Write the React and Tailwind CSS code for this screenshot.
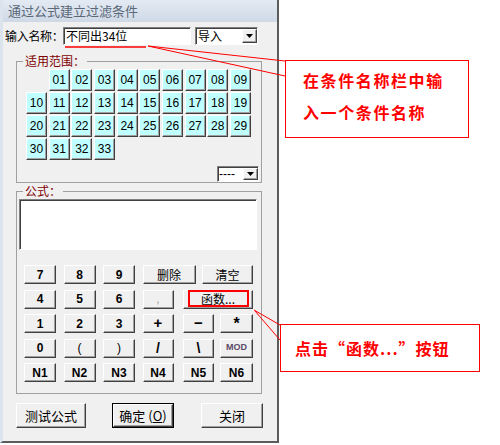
import React from 'react';

const CJK = "font-['SimSun','Noto_Sans_CJK_SC',sans-serif]";
const SANS = "font-['Liberation_Sans','Noto_Sans_CJK_SC',sans-serif]";
const raised =
  'border border-t-white border-l-white border-r-[#404040] border-b-[#404040] shadow-[inset_-1px_-1px_0_#a0a0a0]';
const sunken =
  'border border-t-[#808080] border-l-[#808080] border-r-white border-b-white shadow-[inset_1px_1px_0_#404040]';

function Arrow() {
  return (
    <svg width="7" height="4" viewBox="0 0 7 4">
      <polygon points="0,0 7,0 3.5,4" fill="#000" />
    </svg>
  );
}

function Key({ className = '', children }) {
  return (
    <div className={`h-[19px] flex items-center justify-center bg-[#f0f0f0] text-[12px] font-bold text-black ${SANS} ${raised} ${className}`}>
      {children}
    </div>
  );
}

function Cell({ label }) {
  if (!label) return <div className="w-[21px] h-[22px]" />;
  return (
    <div className={`w-[21px] h-[22px] flex items-center justify-center bg-[#c0ffff] text-[12px] text-black ${SANS} ${raised}`}>
      {label}
    </div>
  );
}

const cells = [
  '', '01', '02', '03', '04', '05', '06', '07', '08', '09',
  '10', '11', '12', '13', '14', '15', '16', '17', '18', '19',
  '20', '21', '22', '23', '24', '25', '26', '27', '28', '29',
  '30', '31', '32', '33',
];

export default function App() {
  return (
    <div className="relative w-[500px] h-[445px] bg-white overflow-hidden">
      {/* Dialog window */}
      <div className="w-[279px] h-[443px] flex flex-col bg-[#f0f0f0] border-l-[3px] border-l-[#dbe3ec] border-r-2 border-r-[#5c5c5c] border-b-2 border-b-[#5c5c5c]">
        <div className={`h-[22px] shrink-0 flex items-center pl-[5px] bg-gradient-to-b from-[#e3eaf3] to-[#cfd9e6] text-[13px] text-[#5a6878] ${CJK}`}>
          通过公式建立过滤条件
        </div>

        <div className="mt-[5px] flex items-center h-[18px]">
          <span className={`ml-[2px] w-[58px] shrink-0 whitespace-nowrap text-[12px] tracking-[-0.3px] text-black ${CJK}`}>输入名称：</span>
          <div className={`w-[128px] h-[18px] bg-white flex items-center pl-[2px] text-[12px] text-black ${CJK} ${sunken}`}>
            不同出34位
          </div>
          <div className={`ml-[4px] w-[63px] h-[18px] bg-white flex items-center ${sunken}`}>
            <span className={`flex-1 pl-[2px] text-[12px] text-black ${CJK}`}>导入</span>
            <div className={`w-[15px] h-[14px] flex items-center justify-center bg-[#f0f0f0] ${raised}`}>
              <Arrow />
            </div>
          </div>
        </div>

        {/* 适用范围 */}
        <fieldset className="mt-[9px] ml-[13px] w-[246px] border border-[#a0a0a0] pt-[1px]">
          <legend className={`ml-[6px] px-[2px] text-[12px] leading-[14px] text-[#800000] ${CJK}`}>适用范围：</legend>
          <div className="pl-[9px] grid grid-cols-[repeat(10,21px)] gap-x-[1.67px] gap-y-[1px]">
            {cells.map((c, i) => (
              <Cell key={i} label={c} />
            ))}
          </div>
          <div className="flex justify-end mt-[6px] pr-[2px]">
            <div className={`w-[42px] h-[16px] bg-white flex items-center ${sunken}`}>
              <span className={`flex-1 pl-[1px] text-[12px] leading-none text-black ${SANS}`}>----</span>
              <div className={`w-[15px] h-[12px] flex items-center justify-center bg-[#f0f0f0] ${raised}`}>
                <Arrow />
              </div>
            </div>
          </div>
        </fieldset>

        {/* 公式 */}
        <fieldset className="mt-[1px] ml-[13px] w-[246px] border border-[#a0a0a0] pt-[1px] pb-[11px]">
          <legend className={`ml-[6px] px-[2px] text-[12px] leading-[14px] text-[#800000] ${CJK}`}>公式：</legend>
          <div className={`ml-[2px] w-[238px] h-[51px] bg-white ${sunken}`} />

          <div className="mt-[15px] pl-[7px] flex flex-col gap-[5.5px]">
            <div className="flex">
              <Key className="w-[32px]">7</Key>
              <Key className="ml-[7.5px] w-[32px]">8</Key>
              <Key className="ml-[7.5px] w-[32px]">9</Key>
              <Key className={`ml-[7.5px] w-[53px] !font-normal ${CJK}`}>删除</Key>
              <Key className={`ml-[6.5px] w-[51px] !font-normal ${CJK}`}>清空</Key>
            </div>
            <div className="flex">
              <Key className="w-[32px]">4</Key>
              <Key className="ml-[7.5px] w-[32px]">5</Key>
              <Key className="ml-[7.5px] w-[32px]">6</Key>
              <Key className="ml-[7.5px] w-[31px] !font-normal !text-[#a0a0a0]">,</Key>
              <Key className={`ml-[9.5px] w-[70px] !font-normal ${CJK}`}>函数...</Key>
            </div>
            <div className="flex">
              <Key className="w-[32px]">1</Key>
              <Key className="ml-[7.5px] w-[32px]">2</Key>
              <Key className="ml-[7.5px] w-[32px]">3</Key>
              <Key className="ml-[7.5px] w-[31px] !text-[15px]">+</Key>
              <Key className="ml-[9.5px] w-[31px] !text-[15px]">−</Key>
              <Key className="ml-[6px] w-[33px] !text-[16px]">*</Key>
            </div>
            <div className="flex">
              <Key className="w-[32px]">0</Key>
              <Key className="ml-[7.5px] w-[32px] !font-normal">(</Key>
              <Key className="ml-[7.5px] w-[32px] !font-normal">)</Key>
              <Key className="ml-[7.5px] w-[31px] !text-[14px]">/</Key>
              <Key className="ml-[9.5px] w-[31px] !text-[14px]">\</Key>
              <Key className="ml-[6px] w-[33px] !text-[9px] !text-[#5b4a68]">MOD</Key>
            </div>
            <div className="flex">
              <Key className="w-[32px]">N1</Key>
              <Key className="ml-[7.5px] w-[32px]">N2</Key>
              <Key className="ml-[7.5px] w-[32px]">N3</Key>
              <Key className="ml-[7.5px] w-[31px]">N4</Key>
              <Key className="ml-[9.5px] w-[31px]">N5</Key>
              <Key className="ml-[6px] w-[33px]">N6</Key>
            </div>
          </div>
        </fieldset>

        {/* Bottom buttons */}
        <div className={`mt-[9px] ml-[13px] flex text-[13px] text-black ${CJK}`}>
          <div className={`w-[70px] h-[25px] flex items-center justify-center bg-[#f0f0f0] ${raised}`}>测试公式</div>
          <div className="ml-[26px] w-[62px] h-[25px] border border-black">
            <div className={`w-full h-full flex items-center justify-center bg-[#f0f0f0] ${raised}`}>
              确定 (<span className="underline">O</span>)
            </div>
          </div>
          <div className={`ml-[27px] w-[62px] h-[25px] flex items-center justify-center bg-[#f0f0f0] ${raised}`}>关闭</div>
        </div>
      </div>

      {/* Annotation lines */}
      <svg className="absolute inset-0 pointer-events-none" width="500" height="445" viewBox="0 0 500 445">
        <line x1="65" y1="47" x2="146" y2="47" stroke="#ff0000" strokeWidth="1.6" />
        <line x1="148" y1="46" x2="285" y2="61" stroke="#ff0000" strokeWidth="1" />
        <line x1="148" y1="46" x2="285" y2="76" stroke="#ff0000" strokeWidth="1" />
        <rect x="189" y="291" width="59" height="15" fill="none" stroke="#ff0000" strokeWidth="2" />
        <line x1="254" y1="310" x2="280" y2="325" stroke="#ff0000" strokeWidth="1" />
        <line x1="255" y1="311" x2="280" y2="340" stroke="#ff0000" strokeWidth="1" />
      </svg>

      {/* Callouts */}
      <div className={`absolute left-[285px] top-[60px] w-[184px] h-[78px] border border-[#ff0000] bg-white pl-[17px] pt-[3px] text-[16px] leading-[32px] font-bold tracking-[1.6px] text-[#ff0000] ${CJK}`}>
        <div>在条件名称栏中输</div>
        <div>入一个条件名称</div>
      </div>
      <div className={`absolute left-[280px] top-[324px] w-[200px] h-[48px] border border-[#ff0000] bg-white pl-[14px] flex items-center text-[16px] font-bold tracking-[1px] text-[#ff0000] ${CJK}`}>
        点击“函数...”按钮
      </div>
    </div>
  );
}
